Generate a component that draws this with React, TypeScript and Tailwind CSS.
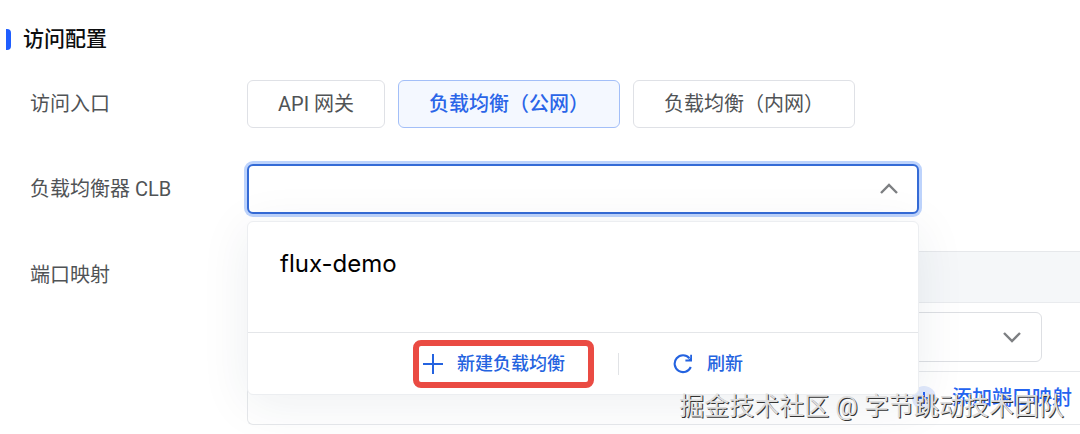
import { useState } from "react";
import { clsx } from "clsx";

const entries = ["API 网关", "负载均衡（公网）", "负载均衡（内网）"];
const balancers = ["flux-demo"];

function Chevron({ up = false }: { up?: boolean }) {
  return (
    <svg
      viewBox="0 0 20 12"
      className="pointer-events-none absolute right-5 top-1/2 h-3 w-5 -translate-y-1/2"
      fill="none"
      stroke="#7d7f82"
      strokeWidth="2.4"
    >
      <path d={up ? "M2 10 10 2l8 8" : "M2 2l8 8 8-8"} />
    </svg>
  );
}

function PlusIcon() {
  return (
    <svg viewBox="0 0 20 20" className="size-5" stroke="currentColor" strokeWidth="2">
      <path d="M10 0v20M0 10h20" />
    </svg>
  );
}

function RefreshIcon() {
  return (
    <svg viewBox="0 0 20 20" className="size-5" fill="none" stroke="currentColor" strokeWidth="2.1">
      <path d="M17.8 13A8.4 8.4 0 1 1 16.4 4.2" />
      <path d="M19 .8v6.6h-6.6v-1.8h3.2l1.6-1.6V.8z" fill="currentColor" stroke="none" />
    </svg>
  );
}

export default function App() {
  const [entry, setEntry] = useState(1);
  const [balancer, setBalancer] = useState("");

  return (
    <main className="relative overflow-hidden bg-white pb-2.5 pt-6 font-['Roboto','Noto_Sans_CJK_SC',sans-serif] text-xl leading-7 text-[#505356]">
      <h2 className="flex items-center gap-3 pl-1.5 text-[21px] font-medium leading-[30px] text-[#0c0d0e]">
        <span className="h-[21px] w-[5px] rounded-r-sm bg-[#1f5eff]" />
        访问配置
      </h2>

      <div className="mt-[26px] flex items-center pl-[30px]">
        <span id="entry" className="w-[217px] shrink-0">访问入口</span>
        <div role="group" aria-labelledby="entry" className="flex gap-[13px]">
          {entries.map((label, i) => (
            <button
              key={label}
              onClick={() => setEntry(i)}
              aria-pressed={entry === i}
              className={clsx(
                "h-12 whitespace-nowrap rounded-md border px-[30px]",
                entry === i
                  ? "border-[#a3bff8] bg-[#f4f8ff] font-medium text-[#2a65e8]"
                  : "border-[#dfe1e6] bg-white"
              )}
            >
              {label}
            </button>
          ))}
        </div>
      </div>

      <div className="mt-9 flex items-center pl-[30px]">
        <label htmlFor="clb" className="w-[217px] shrink-0">负载均衡器 CLB</label>
        <div className="relative w-[672px]">
          <select
            id="clb"
            value={balancer}
            onChange={(e) => setBalancer(e.target.value)}
            className="block h-[50px] w-full appearance-none rounded-md border-2 border-[#356bd6] bg-white px-8 outline-none ring-3 ring-[#bdd3fc]"
          >
            <option value="" />
            {balancers.map((name) => (
              <option key={name}>{name}</option>
            ))}
          </select>
          <Chevron up />

          <div className="absolute left-0 top-full z-10 mt-[7px] w-full rounded-md border border-[#eceef1] bg-white shadow-[0_8px_50px_rgba(30,50,80,0.08)]">
            <ul className="h-[110px] pt-5">
              {balancers.map((name) => (
                <li key={name}>
                  <button
                    onClick={() => setBalancer(name)}
                    className="w-full px-8 py-1 text-left font-['Inter',sans-serif] text-2xl leading-9 text-black"
                  >
                    {name}
                  </button>
                </li>
              ))}
            </ul>
            <div className="flex h-[62px] items-center border-t border-[#e4e6e9] pl-[165px] text-[18px] font-medium text-[#2463e0]">
              <button className="flex h-12 w-[181px] items-center gap-3.5 whitespace-nowrap rounded-lg border-6 border-[#ea4b43] pl-1">
                <PlusIcon />
                新建负载均衡
              </button>
              <span className="ml-6 h-[22px] w-px bg-[#e1e3e6]" />
              <button className="ml-[54px] flex items-center gap-3.5">
                <RefreshIcon />
                刷新
              </button>
            </div>
          </div>
        </div>
      </div>

      <div className="mt-[37px] flex items-start pl-[30px]">
        <span className="mt-2.5 w-[217px] shrink-0">端口映射</span>
        <div className="min-w-0 grow rounded-bl-md border-y border-l border-[#e6e8eb]">
          <div className="h-[51px] border-b border-[#e9ebee] bg-[#f5f7f9]" />
          <div className="border-b border-[#e6e8eb] py-[9px]">
            <div className="relative ml-8 w-[762px]">
              <select
                aria-label="端口映射"
                className="block h-[50px] w-full appearance-none rounded-md border border-[#dddfe3] bg-white outline-none"
              >
                <option />
              </select>
              <Chevron />
            </div>
          </div>
          <div className="flex h-[52px] items-center justify-end pr-2">
            <button className="flex items-center gap-4 whitespace-nowrap font-medium text-[#2463f0]">
              <span className="flex size-6 items-center justify-center rounded-full bg-[#e1e9fc]">
                <svg viewBox="0 0 12 12" className="size-3" stroke="currentColor" strokeWidth="2">
                  <path d="M6 0v12M0 6h12" />
                </svg>
              </span>
              添加端口映射
            </button>
          </div>
        </div>
      </div>

      <p className="pointer-events-none absolute bottom-2 right-4 z-20 whitespace-nowrap text-[25px] leading-10 text-[#dedede] [text-shadow:1px_1px_0_#333]">
        掘金技术社区 @ 字节跳动技术团队
      </p>
    </main>
  );
}
